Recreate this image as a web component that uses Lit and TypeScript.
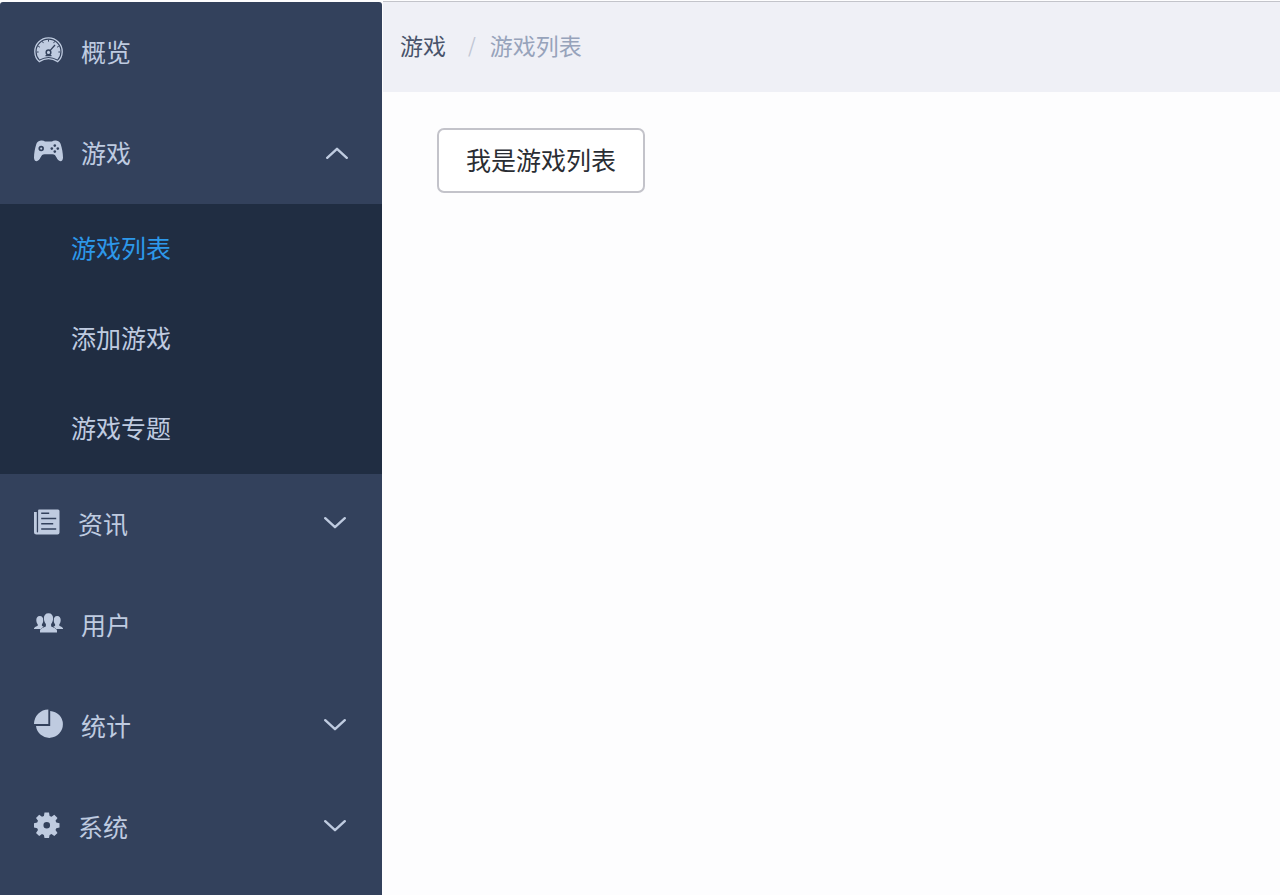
import { LitElement, html, svg, css, nothing, TemplateResult } from "lit";
import { customElement, property, state } from "lit/decorators.js";
import { classMap } from "lit/directives/class-map.js";

interface MenuItem {
  id: string;
  label: string;
  icon: string;
  children?: string[];
}

const MENU: MenuItem[] = [
  { id: "overview", label: "概览", icon: "gauge" },
  { id: "games", label: "游戏", icon: "gamepad", children: ["游戏列表", "添加游戏", "游戏专题"] },
  { id: "news", label: "资讯", icon: "news", children: ["资讯列表"] },
  { id: "users", label: "用户", icon: "users" },
  { id: "stats", label: "统计", icon: "pie", children: ["数据统计"] },
  { id: "system", label: "系统", icon: "gear", children: ["系统设置"] },
];

/* Every icon is drawn on a 30px high canvas; widths differ per glyph. */
const ICONS: Record<string, { width: number; art: TemplateResult }> = {
  gauge: {
    width: 29,
    art: svg`
      <path fill="none" stroke="currentColor" stroke-width="1.3" d="M5.2 26.6 A13.7 13.7 0 1 1 23.8 26.6 Q14.5 20.6 5.2 26.6Z"/>
      <path fill="currentColor" d="M5.6 24.6 A11.9 11.9 0 1 1 23.4 24.6 Q14.5 19.4 5.6 24.6Z"/>
      <g class="cut" fill="none" stroke-width="1">
        <path d="M14.5 4.6v2M8.4 6.4l1 1.7M20.6 6.4l-1 1.7M4.200 11.200l1.700 1M24.800 11.200l-1.700 1M2.600 17h2M26.400 17h-2"/>
        <circle cx="14.5" cy="17.4" r="2.3" stroke-width="1.5"/>
        <path stroke-width="1.3" d="M16 15.6l5-5.6M11.500 20.600h6"/>
      </g>`,
  },
  gamepad: {
    width: 29,
    art: svg`
      <path fill="currentColor" d="M6 4.8C8 4.2 9.8 4.6 11 5.4h7C19.200 4.600 21 4.200 23 4.800c2 .3 3.200 1.600 3.800 3.600C28 12 29 17 29 21.500c0 2.400-1 3.700-2.500 3.700-1.800 0-3-1.600-4-3.600-1-2.200-2-3.400-4-3.400h-8c-2 0-3 1.200-4 3.400-1 2-2.200 3.600-4 3.600C1 25.200 0 23.900 0 21.500 0 17 1 12 2.200 8.400 2.800 6.400 4 5.100 6 4.800Z"/>
      <circle class="cut" fill="none" stroke-width="1.7" cx="7.200" cy="12.600" r="1.900"/>
      <g class="hole"><circle cx="20.800" cy="9.600" r="1.300"/><circle cx="20.800" cy="15.600" r="1.300"/><circle cx="17.800" cy="12.600" r="1.300"/><circle cx="23.800" cy="12.600" r="1.300"/></g>`,
  },
  news: {
    width: 26,
    art: svg`
      <path fill="currentColor" d="M5 2.500h19q1.500 0 1.500 1.500v21.500q0 2-2 2H2.500Q0 27.500 0 25V5h2.800v19.500q0 1 .6 1 .7 0 .7-1V3.500q0-1 .9-1Z"/>
      <path class="cut" fill="none" stroke-width="1.500" d="M7.200 6.200h8M7.200 11.500h15M7.200 16.700h12M7.200 21.900h15"/>`,
  },
  users: {
    width: 29,
    art: svg`
      <g fill="currentColor">
        <path d="M5.800 8c2.400 0 3.500 1.700 3.500 4 0 1.900-.6 3.400-1.400 4.300v1.500l3.100 2V21H0v-.8q.4-1 3.700-2.400v-1.500c-.8-.9-1.400-2.400-1.400-4.300 0-2.300 1.100-4 3.500-4Z"/>
        <path d="M23.200 8c2.400 0 3.500 1.700 3.500 4 0 1.900-.6 3.400-1.400 4.300v1.500q3.300 1.400 3.700 2.400v.8H18v-1.200l3.100-2v-1.500c-.8-.9-1.400-2.400-1.400-4.300 0-2.300 1.100-4 3.500-4Z"/>
        <path class="cut" stroke-width="1" paint-order="stroke" d="M14.500 5.200c3 0 4.600 2.100 4.600 5 0 2.500-.8 4.500-2 5.700v2.400c1.200 1.300 5.300 1.700 5.900 4.200v1.900H6v-1.900c.6-2.500 4.700-2.900 5.900-4.200v-2.400c-1.200-1.200-2-3.200-2-5.700 0-2.900 1.600-5 4.600-5Z"/>
      </g>`,
  },
  pie: {
    width: 29,
    art: svg`
      <g fill="currentColor">
        <path d="M14.300 .5V15H0A14.400 14.500 0 0 1 14.300 .5Z"/>
        <path d="M16.200 1.900A13.500 13.500 0 1 1 2 17H16.200Z"/>
      </g>`,
  },
  gear: {
    width: 26,
    art: svg`
      <path fill="currentColor" fill-rule="evenodd" d="M10.500 2.500h4.500l.6 3.400 1.900.8 2.800-2L23.500 7.900l-2 2.800.8 1.900 3.200.6v4.400l-3.200.6-.8 1.900 2 2.800-3.200 3.200-2.800-2-1.900.8-.6 3.100h-4.500l-.6-3.100-1.900-.8-2.800 2L2 22.900l2-2.800-.8-1.900L0 17.600v-4.400l3.200-.6.8-1.900-2-2.800 3.200-3.200 2.800 2 1.900-.8ZM12.750 12a3.300 3.300 0 1 0 0 6.600 3.300 3.300 0 0 0 0-6.600Z"/>`,
  },
};

@customElement("side-menu")
class SideMenu extends LitElement {
  @state() private open = new Set(["games"]);
  @property() current = "游戏列表";

  static styles = css`
    :host {
      display: block;
      background: #33415c;
      color: #bfcbe0;
      border-radius: 3px 3px 0 0;
      overflow: hidden;
    }
    ul { list-style: none; margin: 0; padding: 0; }
    .entry {
      display: flex;
      align-items: center;
      box-sizing: border-box;
      width: 100%;
      height: 101px;
      padding: 0 34px;
      border: 0;
      background: none;
      color: inherit;
      font: inherit;
      text-align: left;
      text-decoration: none;
      cursor: pointer;
    }
    .icon { flex: none; margin: 0 18px 6px 0; }
    .cut { stroke: #33415c; }
    .hole { fill: #33415c; }
    .label { flex: 1; padding-bottom: 4px; }
    .arrow { flex: none; margin: 0 2px 4px 0; }
    .arrow.up { margin: 0 0 2px; }
    .sub { background: #202d42; }
    .link {
      display: flex;
      align-items: center;
      box-sizing: border-box;
      height: 90px;
      padding: 0 0 4px 71px;
      color: inherit;
      text-decoration: none;
    }
    .link.active { color: #2d98ea; }
  `;

  private toggle(id: string) {
    const next = new Set(this.open);
    if (!next.delete(id)) next.add(id);
    this.open = next;
  }

  private face(item: MenuItem) {
    const { width, art } = ICONS[item.icon];
    return html`
      <svg class="icon" width=${width} height="30" viewBox="0 0 ${width} 30" aria-hidden="true">${art}</svg>
      <span class="label">${item.label}</span>`;
  }

  private row(item: MenuItem) {
    if (!item.children) {
      return html`<li><a class="entry" href="#${item.id}">${this.face(item)}</a></li>`;
    }
    const open = this.open.has(item.id);
    return html`
      <li>
        <button class="entry" type="button" aria-expanded=${open} @click=${() => this.toggle(item.id)}>
          ${this.face(item)}
          <svg class=${classMap({ arrow: true, up: open })} width="22" height="12" viewBox="0 0 22 12" aria-hidden="true">
            <path fill="none" stroke="currentColor" stroke-width="2.400" stroke-linecap="round" stroke-linejoin="round"
              d=${open ? "M1.200 10.800 11 1.800l9.800 9" : "M1.200 1.200 11 10.200l9.800-9"}></path>
          </svg>
        </button>
        ${open
          ? html`<ul class="sub">
              ${item.children.map(
                (name) => html`<li>
                  <a class=${classMap({ link: true, active: name === this.current })} href="#${item.id}">${name}</a>
                </li>`
              )}
            </ul>`
          : nothing}
      </li>`;
  }

  render() {
    return html`<nav aria-label="主菜单"><ul>${MENU.map((item) => this.row(item))}</ul></nav>`;
  }
}

@customElement("app-root")
class AppRoot extends LitElement {
  static styles = css`
    :host {
      display: grid;
      grid-template-columns: 382px 1fr;
      box-sizing: border-box;
      min-height: 100vh;
      padding-top: 1px;
      background: #fdfdfe;
      font-family: "Noto Sans CJK SC", sans-serif;
      font-size: 25px;
      line-height: 36px;
    }
    side-menu { margin-top: 1px; }
    .page { border-top: 1px solid #c3c4ca; margin-left: 1px; }
    .crumbs {
      display: flex;
      align-items: center;
      box-sizing: border-box;
      height: 90px;
      padding: 0 17px 5px;
      background: #eff0f6;
      color: #97a3bb;
      font-size: 23px;
    }
    .home { color: #48536a; text-decoration: none; }
    .slash { margin: 0 14px 0 22px; color: #c0c6d4; font-size: 20px; }
    .content { padding: 36px 54px; }
    .action {
      height: 65px;
      padding: 0 27px 4px;
      border: 2px solid #c3c3ca;
      border-radius: 7px;
      background: #fff;
      color: #2a2d33;
      font: inherit;
      cursor: pointer;
    }
  `;

  render() {
    return html`
      <side-menu></side-menu>
      <div class="page">
        <nav class="crumbs" aria-label="面包屑">
          <a class="home" href="#games">游戏</a>
          <span class="slash">/</span>
          <span aria-current="page">游戏列表</span>
        </nav>
        <main class="content">
          <button class="action" type="button">我是游戏列表</button>
        </main>
      </div>`;
  }
}
